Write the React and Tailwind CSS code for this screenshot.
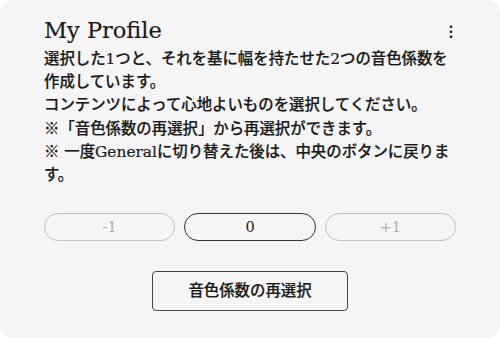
import React from "react";

export default function App() {
  return (
    <div className="w-[500px] h-[338px] bg-white">
      <div
        className="w-[500px] h-[338px] bg-[#f5f5f5] rounded-[14px] px-[44px] pt-[16px] text-[#1a1a1a]"
        style={{ fontFamily: '"DejaVu Serif", "Noto Sans CJK JP", serif' }}
      >
        <div className="flex items-center justify-between">
          <h1 className="text-[22.5px] leading-[28px] font-normal [-webkit-text-stroke:0.15px_#1a1a1a]">
            My Profile
          </h1>
          <svg width="20" height="20" viewBox="0 0 20 20" className="mr-[-5px] mt-[4px]">
            <circle cx="10" cy="4.8" r="1.4" fill="#222" />
            <circle cx="10" cy="9.8" r="1.4" fill="#222" />
            <circle cx="10" cy="14.8" r="1.4" fill="#222" />
          </svg>
        </div>
        <div className="mt-[4px] text-[15.4px] leading-[23.2px] font-medium [-webkit-text-stroke:0.2px_#1a1a1a]">
          <p>選択した1つと、それを基に幅を持たせた2つの音色係数を作成しています。</p>
          <p>コンテンツによって心地よいものを選択してください。</p>
          <p>※「音色係数の再選択」から再選択ができます。</p>
          <p>※ 一度Generalに切り替えた後は、中央のボタンに戻ります。</p>
        </div>
        <div className="mt-[26px] grid grid-cols-3 gap-[9px]">
          <button className="h-[28px] rounded-full border border-[#c4c4c4] text-[#b0b0b0] text-[14.5px] leading-none">
            -1
          </button>
          <button className="h-[28px] rounded-full border-[1.5px] border-[#333] text-[#222] text-[14.5px] leading-none">
            0
          </button>
          <button className="h-[28px] rounded-full border border-[#c4c4c4] text-[#b0b0b0] text-[14.5px] leading-none">
            +1
          </button>
        </div>
        <div className="mt-[30px] flex justify-center">
          <button className="w-[196px] h-[40px] rounded-[4px] border-[1.5px] border-[#444] text-[15.4px] font-medium text-[#1a1a1a] [-webkit-text-stroke:0.2px_#1a1a1a]">
            音色係数の再選択
          </button>
        </div>
      </div>
    </div>
  );
}
